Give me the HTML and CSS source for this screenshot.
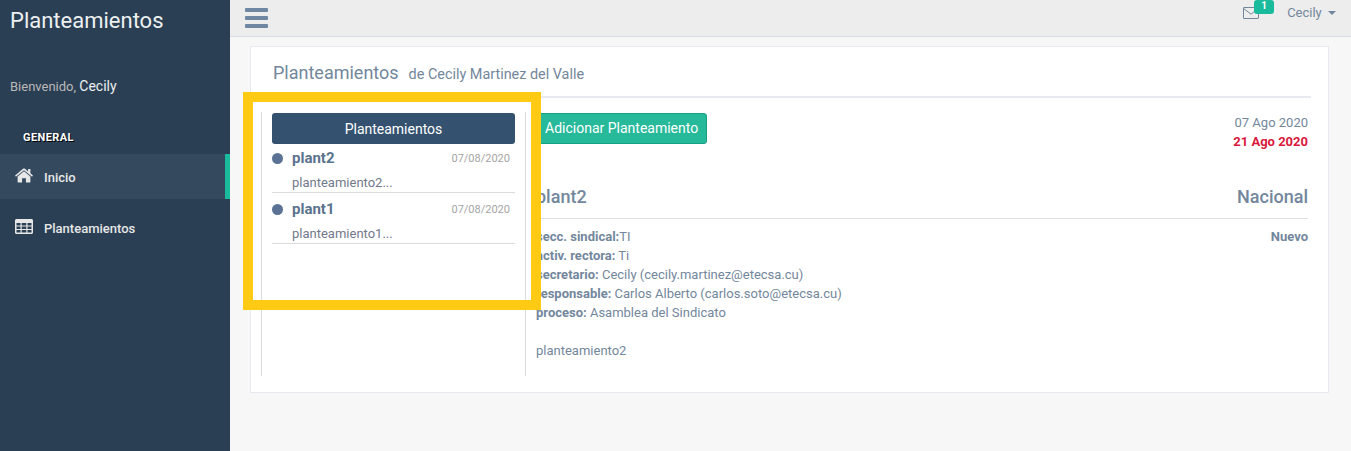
FILE: index.html
```html
<!DOCTYPE html>
<html lang="en">
<head>
    <meta charset="UTF-8">
    <title>Planteamientos</title>
    <link rel="stylesheet" href="styles.css">
</head>
<body>

<div class="layout">
    <aside class="sidebar">
        <div class="brand">Planteamientos</div>
        <div class="welcome">Bienvenido, <span>Cecily</span></div>
        <h3 class="menu-title">GENERAL</h3>
        <a class="menu-item active">
            <svg class="menu-icon" viewBox="0 0 18 15" width="18" height="15"><path fill="currentColor" d="M9 3.2 2.6 8.5V14c0 .3.2.5.5.5h4V10.300h3.800v4.200h4c.3 0 .5-.2.5-.5V8.500zM17.900 7.400 15.400 5.300V1h-2.300v2.400L10 .8C9.400.300 8.600.300 8 .8L.1 7.400c-.1.100-.1.300 0 .4l.7.8c.1.100.3.100.4 0L9 2.200l7.800 6.400c.1.100.3.100.4 0l.7-.8c.1-.1.1-.3 0-.4z"/></svg>
            <span>Inicio</span>
        </a>
        <a class="menu-item">
            <svg class="menu-icon" viewBox="0 0 18 15" width="18" height="15"><path fill="currentColor" fill-rule="evenodd" d="M1.500 0h15c.8 0 1.500.7 1.500 1.500v12c0 .8-.7 1.500-1.500 1.500h-15C.7 15 0 14.300 0 13.500v-12C0 .7.7 0 1.500 0zM1.500 4v2.500h4V4zm5.200 0v2.500h4.600V4zm5.800 0v2.500h4V4zM1.500 7.500V10h4V7.500zm5.200 0V10h4.600V7.500zm5.800 0V10h4V7.500zM1.500 11v2.500h4V11zm5.200 0v2.500h4.600V11zm5.800 0v2.500h4V11z"/></svg>
            <span>Planteamientos</span>
        </a>
    </aside>

    <div class="content">
        <header class="topbar">
            <div class="burger"><i></i><i></i><i></i></div>
            <div class="top-right">
                <div class="mail">
                    <svg viewBox="0 0 16 12" width="16" height="12"><path fill="none" stroke="currentColor" d="M1 .5h14c.3 0 .5.2.5.5v10c0 .3-.2.5-.5.5H1c-.3 0-.5-.2-.5-.5V1c0-.3.2-.5.5-.5zM.7 1.500 8 7.200l7.300-5.700"/></svg>
                    <span class="badge">1</span>
                </div>
                <div class="user">Cecily <b class="caret"></b></div>
            </div>
        </header>

        <main class="main">
            <section class="panel">
                <div class="panel-title">
                    <h2>Planteamientos</h2>
                    <small>de Cecily Martinez del Valle</small>
                </div>
                <div class="panel-body">
                    <div class="inbox">
                        <button class="inbox-head">Planteamientos</button>
                        <div class="mail-row">
                            <div class="mail-top">
                                <span class="dot"></span>
                                <strong>plant2</strong>
                                <time>07/08/2020</time>
                            </div>
                            <p>planteamiento2...</p>
                        </div>
                        <div class="mail-row">
                            <div class="mail-top">
                                <span class="dot"></span>
                                <strong>plant1</strong>
                                <time>07/08/2020</time>
                            </div>
                            <p>planteamiento1...</p>
                        </div>
                    </div>
                    <div class="detail">
                        <div class="detail-top">
                            <button class="btn-add">Adicionar Planteamiento</button>
                            <div class="dates">
                                <div>07 Ago 2020</div>
                                <div class="deadline">21 Ago 2020</div>
                            </div>
                        </div>
                        <div class="detail-head">
                            <span>plant2</span>
                            <span>Nacional</span>
                        </div>
                        <div class="detail-info">
                            <div class="info-lines">
                                <div><b>secc. sindical:</b>TI</div>
                                <div><b>activ. rectora:</b> Ti</div>
                                <div><b>secretario:</b> Cecily (cecily.martinez@etecsa.cu)</div>
                                <div><b>responsable:</b> Carlos Alberto (carlos.soto@etecsa.cu)</div>
                                <div><b>proceso:</b> Asamblea del Sindicato</div>
                                <br>
                                <div>planteamiento2</div>
                            </div>
                            <b>Nuevo</b>
                        </div>
                    </div>
                </div>
            </section>
        </main>
    </div>
</div>

<div class="highlight"></div>

</body>
</html>
```

FILE: styles.css
```css
body {
    margin: 0;
    font-family: Roboto, "Liberation Sans", Arial, sans-serif;
    font-size: 13px;
    color: #73879c;
    background-color: #f7f7f7;
    height: 451px;
    overflow: hidden;
}
.layout {
    display: flex;
    height: 451px;
}

/* Yellow marker drawn over the list */
.highlight {
    position: absolute;
    left: 243px;
    top: 92px;
    width: 298px;
    height: 218px;
    box-sizing: border-box;
    border: 10px solid #ffca14;
}

/* Sidebar */
.sidebar {
    width: 230px;
    flex-shrink: 0;
    background-color: #2a3f54;
    color: #ecf0f1;
}
.brand {
    font-size: 22px;
    line-height: 26px;
    padding: 8px 0 0 10px;
    color: #ecf0f1;
}
.welcome {
    margin-top: 43px;
    padding-left: 10px;
    font-size: 13px;
    line-height: 18px;
    color: #bab8b8;
}
.welcome span {
    color: #ecf0f1;
    font-size: 14px;
}
.menu-title {
    margin: 35px 0 0;
    padding-left: 23px;
    font-size: 11px;
    line-height: 14px;
    font-weight: 700;
    letter-spacing: .4px;
    color: #fff;
    text-shadow: 1px 1px #000;
}
.menu-item {
    display: flex;
    align-items: center;
    height: 45px;
    padding-left: 15px;
    font-size: 13px;
    font-weight: 500;
    color: #e7e7e7;
}
.menu-item.active {
    margin-top: 9px;
    box-sizing: border-box;
    padding-top: 1px;
    background-color: #34495e;
    border-right: 5px solid #1abb9c;
    margin-bottom: 7px;
    color: #e7e7e7;
}
.menu-icon {
    width: 18px;
    margin-right: 11px;
    margin-top: -4px;
}

/* Top bar */
.content {
    flex: 1;
    min-width: 0;
}
.topbar {
    display: flex;
    justify-content: space-between;
    height: 36px;
    background-color: #ededed;
    border-bottom: 1px solid #d9dee4;
}
.burger {
    margin: 8px 0 0 15px;
    width: 23px;
}
.burger i {
    display: block;
    height: 4px;
    margin-bottom: 4px;
    border-radius: 1px;
    background-color: #7087a3;
}
.top-right {
    display: flex;
    align-items: flex-start;
}
.mail {
    position: relative;
    width: 16px;
    height: 12px;
    margin: 7px 28px 0 0;
    color: #73879c;
}
.mail svg {
    display: block;
}
.badge {
    position: absolute;
    left: 11px;
    top: -7px;
    width: 20px;
    height: 14px;
    border-radius: 3px;
    background-color: #1abb9c;
    color: #fff;
    font-size: 10px;
    font-weight: 700;
    line-height: 12px;
    text-align: center;
}
.user {
    margin: 4px 15px 0 0;
    font-size: 13px;
    line-height: 17px;
    color: #73879c;
}
.caret {
    display: inline-block;
    margin-left: 3px;
    vertical-align: 2px;
    border-top: 4px solid #73879c;
    border-left: 4px solid transparent;
    border-right: 4px solid transparent;
}

/* Panel */
.main {
    padding: 9px 22px 0 20px;
}
.panel {
    height: 347px;
    box-sizing: border-box;
    padding: 0 20px 0 10px;
    background-color: #fff;
    border: 1px solid #e6e9ed;
}
.panel-title {
    display: flex;
    align-items: baseline;
    height: 51px;
    margin-left: 6px;
    margin-right: -3px;
    padding: 14px 0 0 6px;
    box-sizing: border-box;
    border-bottom: 2px solid #e6e9ed;
}
.panel-title h2 {
    margin: 0;
    font-size: 18px;
    line-height: 24px;
    font-weight: 400;
}
.panel-title small {
    margin-left: 10px;
    font-size: 14.4px;
}
.panel-body {
    display: flex;
    margin-top: 14px;
    height: 264px;
}

/* Left list */
.inbox {
    width: 265px;
    flex-shrink: 0;
    box-sizing: border-box;
    padding: 1px 10px 0;
    border-left: 1px solid #d9dadd;
    border-right: 1px solid #d9dadd;
}
.inbox-head {
    display: block;
    width: 100%;
    height: 31px;
    padding: 0;
    border: 0;
    border-radius: 3px;
    background-color: #34526f;
    color: #fff;
    font-family: inherit;
    font-size: 14px;
}
.mail-row {
    height: 49px;
    margin-bottom: 2px;
    box-sizing: border-box;
    border-bottom: 1px solid #dbdbdb;
}
.mail-top {
    display: flex;
    align-items: center;
    height: 28px;
    padding-right: 5px;
}
.dot {
    width: 11px;
    height: 11px;
    margin-right: 9px;
    border-radius: 50%;
    background-color: #5a7394;
}
.mail-top strong {
    flex: 1;
    font-size: 15px;
    font-weight: 700;
    color: #5a738e;
}
.mail-top time {
    font-size: 11px;
    color: #a5a5a5;
}
.mail-row p {
    margin: 0;
    padding: 3px 0 0 20px;
    font-size: 13px;
    line-height: 16px;
    color: #73798c;
}

/* Right detail */
.detail {
    flex: 1;
    min-width: 0;
    padding-left: 10px;
}
.detail-top {
    display: flex;
    justify-content: space-between;
    height: 70px;
}
.btn-add {
    align-self: flex-start;
    height: 31px;
    margin: 1px 0 0;
    padding: 0 8px 2px;
    border: 1px solid #169f85;
    border-radius: 3px;
    background-color: #26b99a;
    color: #fff;
    font-family: inherit;
    font-size: 14px;
}
.dates {
    margin-top: 1px;
    text-align: right;
    line-height: 19px;
}
.deadline {
    color: #d9183b;
    font-weight: 700;
}
.detail-head {
    display: flex;
    justify-content: space-between;
    height: 37px;
    box-sizing: border-box;
    padding-top: 3px;
    font-size: 18px;
    line-height: 24px;
    font-weight: 500;
    border-bottom: 1px solid #dfdfdf;
}
.detail-info {
    display: flex;
    justify-content: space-between;
    padding-top: 8px;
    line-height: 19px;
}
```
